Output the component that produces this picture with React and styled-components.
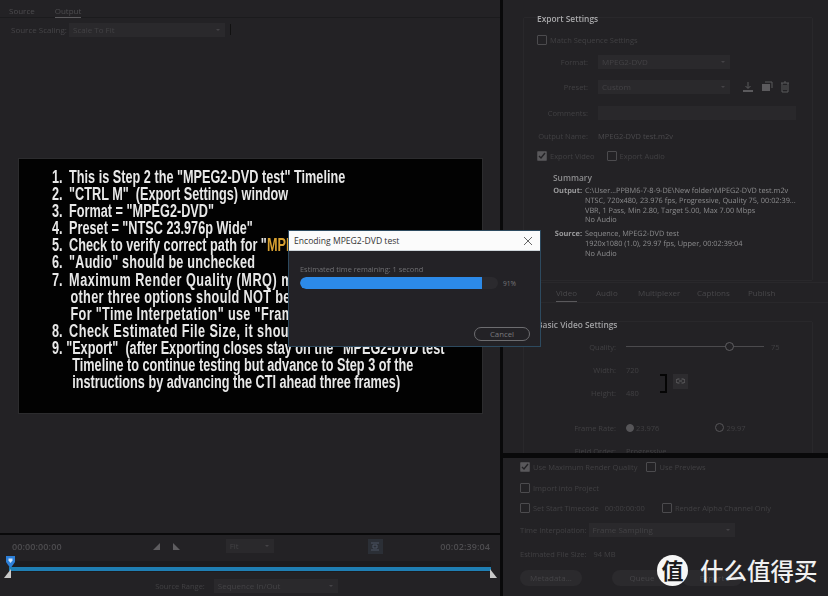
import React from "react";
import styled, { createGlobalStyle } from "styled-components";

const Global = createGlobalStyle`
  html, body { margin: 0; padding: 0; background: #0a0a0b; }
  #root { width: 828px; height: 596px; overflow: hidden; }
  * { box-sizing: border-box; }
`;

const Page = styled.div`
  position: relative;
  width: 828px;
  height: 596px;
  display: grid;
  grid-template-columns: 500px 325px;
  column-gap: 3px;
  background: #09090a;
  font-family: "Open Sans", "Noto Sans", sans-serif;
  overflow: hidden;
`;

const Left = styled.section`
  display: flex;
  flex-direction: column;
  height: 596px;
`;

const Monitor = styled.div`
  height: 533px;
  background: #232225;
  display: flex;
  flex-direction: column;
`;

const TabBar = styled.div`
  height: 18px;
  display: flex;
  padding-left: 9px;
  gap: 20px;
  border-bottom: 1px solid #1b1b1d;
`;

const Tab = styled.div`
  height: 18px;
  padding-top: 6px;
  font-size: 8px;
  line-height: 10px;
  color: #4d4c4f;
  filter: blur(0.4px);
  border-bottom: ${(p) => (p.$on ? "1px solid #5c5b5e" : "none")};
`;

const ScaleRow = styled.div`
  display: flex;
  align-items: center;
  height: 19px;
  padding: 4px 0 0 11px;
`;

const ScaleLabel = styled.span`
  width: 58px;
  font-size: 8px;
  color: #464548;
  filter: blur(0.4px);
`;

const DimSelect = styled.div`
  width: ${(p) => p.$w}px;
  height: ${(p) => p.$h || 14}px;
  margin-left: ${(p) => p.$left || 0}px;
  background: ${(p) => (p.$plain ? "#29282b" : "#2a292c")};
  color: #434245;
  font-size: 8px;
  line-height: ${(p) => p.$h || 14}px;
  padding-left: 4px;
  position: relative;
  filter: blur(0.3px);
  flex: none;
  &::after {
    content: "";
    display: ${(p) => (p.$plain ? "none" : "block")};
    position: absolute;
    right: 5px;
    top: 45%;
    border-left: 2px solid transparent;
    border-right: 2px solid transparent;
    border-top: 2px solid #444346;
  }
`;

const Tick = styled.span`
  width: 1px;
  height: 11px;
  margin-left: 5px;
  background: #111;
`;

const Frame = styled.div`
  margin: 121px 0 0 18px;
  width: 465px;
  height: 256px;
  background: #020202;
  border: 1px solid #2c2c2e;
  padding-top: 10px;
  overflow: hidden;
`;

const Slide = styled.div`
  width: 650px;
  transform: scaleX(0.725);
  transform-origin: left top;
  font-family: "Liberation Sans", Arial, sans-serif;
  font-weight: 700;
  font-size: 17.5px;
  line-height: 17.1px;
  color: #e8e8e8;
  white-space: nowrap;
  filter: blur(0.25px);
`;

const Line = styled.div`
  padding-left: ${(p) => p.$x}px;
  letter-spacing: ${(p) => p.$sp || 0}px;
  display: flex;
`;

const Num = styled.span`
  width: ${(p) => p.$w || 23.6}px;
  letter-spacing: 0;
  flex: none;
`;

const Gold = styled.span`
  color: #d9a232;
`;

const Transport = styled.div`
  flex: 1;
  margin-top: 2px;
  background: #232225;
  display: flex;
  flex-direction: column;
`;

const TimeRow = styled.div`
  height: 18px;
  padding: 0 10px 0 12px;
  display: flex;
  align-items: flex-end;
`;

const Time = styled.span`
  font-size: 9px;
  line-height: 12px;
  letter-spacing: 0.1px;
  font-weight: 600;
  color: #4e4d50;
  filter: blur(0.35px);
  margin-left: ${(p) => (p.$end ? "auto" : "0")};
`;

const TimeTools = styled.div`
  display: flex;
  align-items: center;
  height: 14px;
  margin-left: 90px;
`;

const MiniBtn = styled.div`
  width: 15px;
  height: 15px;
  margin-left: 94px;
  background: #2b2f36;
  display: flex;
  align-items: center;
  justify-content: center;
`;

const Scrub = styled.div`
  position: relative;
  height: 23px;
  margin-top: 2px;
`;

const ScrubBand = styled.div`
  position: absolute;
  left: 9px;
  right: 9px;
  top: 6px;
  height: 11px;
  background: #1c1c1f;
`;

const ScrubBar = styled.div`
  position: absolute;
  left: 9px;
  right: 9px;
  top: 12px;
  height: 4px;
  background: #1f7fb4;
`;

const RangeRow = styled.div`
  display: flex;
  justify-content: center;
  align-items: center;
  gap: 9px;
  height: 15px;
  padding-right: 7px;
`;

const Right = styled.section`
  display: flex;
  flex-direction: column;
  height: 596px;
`;

const Settings = styled.div`
  height: 453px;
  background: #232225;
  overflow: hidden;
  padding: 13px 0 0 34px;
  position: relative;
`;

const SectionFrame = styled.div`
  position: absolute;
  left: 20px;
  width: 290px;
  top: ${(p) => p.$top}px;
  height: ${(p) => p.$h}px;
  border: 1px solid #29282b;
  border-radius: 2px;
`;

const Heading = styled.div`
  position: relative;
  height: 12px;
  font-size: 8.4px;
  line-height: 12px;
  font-weight: 600;
  color: ${(p) => p.$c || "#a9a9ab"};
  filter: blur(0.3px);
  margin-top: ${(p) => p.$top || 0}px;
  margin-left: ${(p) => p.$left || 0}px;
`;

const Row = styled.div`
  position: relative;
  display: flex;
  align-items: center;
  height: ${(p) => p.$h || 14}px;
  margin-top: ${(p) => p.$top || 0}px;
`;

const Check = styled.span`
  width: 10px;
  height: 10px;
  flex: none;
  border: 1px solid #4c4b4e;
  border-radius: 1px;
  margin-right: 3px;
  margin-left: ${(p) => p.$left || 0}px;
  display: flex;
  align-items: center;
  justify-content: center;
  background: ${(p) => (p.$on ? "#59585b" : "transparent")};
  filter: blur(0.3px);
`;

const Dim = styled.span`
  font-size: 7.5px;
  color: ${(p) => p.$c || "#414043"};
  white-space: nowrap;
  filter: blur(0.4px);
  margin-left: ${(p) => p.$left || 0}px;
`;

const Label = styled.span`
  width: ${(p) => p.$w || 51}px;
  flex: none;
  text-align: right;
  margin-right: 10px;
  font-size: 7.5px;
  color: #414043;
  white-space: nowrap;
  filter: blur(0.4px);
`;

const Icons = styled.div`
  display: flex;
  gap: 7px;
  margin-left: 12px;
  color: #5b5a5d;
  filter: blur(0.3px);
`;

const SummaryRow = styled.div`
  position: relative;
  display: flex;
  margin-left: 15px;
  margin-top: ${(p) => p.$top || 0}px;
`;

const SumKey = styled.div`
  width: 30px;
  text-align: right;
  font-size: 7.4px;
  line-height: 9.8px;
  font-weight: 700;
  color: #9a9a9c;
  text-rendering: geometricPrecision;
  filter: blur(0.25px);
`;

const SumVal = styled.div`
  margin-left: 3px;
  font-size: 7.35px;
  line-height: 9.8px;
  color: #8c8c8e;
  white-space: nowrap;
  text-rendering: geometricPrecision;
  filter: blur(0.3px);
`;

const VideoTabs = styled.div`
  position: relative;
  margin: 22px 0 0 -34px;
  height: 21px;
  padding-left: 53px;
  display: flex;
  border-top: 1px solid #29282b;
  border-bottom: 1px solid #29282b;
`;

const VideoTab = styled.div`
  width: ${(p) => p.$w}px;
  font-size: 8px;
  line-height: 20px;
  color: #48474a;
  filter: blur(0.4px);
  position: relative;
  &::after {
    content: "";
    display: ${(p) => (p.$on ? "block" : "none")};
    position: absolute;
    left: 0;
    bottom: 0;
    width: 21px;
    height: 1px;
    background: #5a595c;
  }
`;

const Slider = styled.div`
  width: 138px;
  height: 1px;
  background: #4b4a4d;
  position: relative;
  flex: none;
`;

const Thumb = styled.span`
  position: absolute;
  left: 99px;
  top: -4px;
  width: 9px;
  height: 9px;
  border-radius: 50%;
  background: #232225;
  border: 1px solid #5f5e61;
`;

const DimsBlock = styled.div`
  position: relative;
`;

const Bracket = styled.span`
  position: absolute;
  left: 123px;
  top: 11px;
  width: 7px;
  height: 19px;
  border: 2px solid #050505;
  border-left: none;
`;

const LinkBtn = styled.span`
  position: absolute;
  left: 136px;
  top: 11px;
  width: 15px;
  height: 15px;
  background: #2d2c2f;
  color: #5f5e61;
  display: flex;
  align-items: center;
  justify-content: center;
  filter: blur(0.3px);
`;

const Radio = styled.span`
  width: ${(p) => (p.$on ? 8 : 9)}px;
  height: ${(p) => (p.$on ? 8 : 9)}px;
  border-radius: 50%;
  flex: none;
  border: 1px solid #565558;
  background: ${(p) => (p.$on ? "#565558" : "transparent")};
  margin-right: 2px;
  margin-left: ${(p) => p.$left || 0}px;
`;

const Options = styled.div`
  flex: 1;
  margin-top: 5px;
  background: #232225;
  padding: 2px 0 0 17px;
`;

const Pill = styled.div`
  height: 16px;
  width: ${(p) => p.$w}px;
  margin-right: ${(p) => p.$gap || 0}px;
  border-radius: 8px;
  background: #2b2a2d;
  color: #454447;
  font-size: 8px;
  line-height: 16px;
  text-align: center;
  filter: blur(0.3px);
`;

const Dialog = styled.div`
  position: absolute;
  left: 288px;
  top: 230px;
  width: 253px;
  height: 117px;
  background: #232226;
  border: 1px solid #2d4a5f;
  display: flex;
  flex-direction: column;
`;

const DialogTitle = styled.div`
  height: 20px;
  background: #fbfbfb;
  color: #333;
  font-size: 8.6px;
  line-height: 20px;
  padding-left: 5px;
  display: flex;
  justify-content: space-between;
  align-items: center;
  padding-right: 7px;
  border-bottom: 1px solid #cfd6db;
`;

const Est = styled.div`
  margin: 13px 0 0 11px;
  font-size: 7.4px;
  line-height: 10px;
  color: #707073;
  filter: blur(0.2px);
`;

const ProgressRow = styled.div`
  display: flex;
  align-items: center;
  margin: 3px 0 0 11px;
`;

const Track = styled.div`
  width: 198px;
  height: 12px;
  border-radius: 6px;
  background: #2b2a2e;
  overflow: hidden;
`;

const Fill = styled.div`
  height: 100%;
  border-radius: 6px 0 0 6px;
  background: #2c8ae8;
`;

const Pct = styled.span`
  margin-left: 5px;
  font-size: 6.6px;
  color: #77777a;
`;

const DialogFoot = styled.div`
  margin-top: auto;
  padding: 0 10px 5px 0;
  display: flex;
  justify-content: flex-end;
`;

const CancelBtn = styled.div`
  width: 56px;
  height: 14px;
  border: 1px solid #6d6d70;
  border-radius: 7px;
  font-size: 7.8px;
  line-height: 12px;
  text-align: center;
  color: #7a7a7d;
`;

const Watermark = styled.div`
  position: absolute;
  left: 657px;
  top: 555px;
  display: flex;
  align-items: center;
  gap: 12px;
  color: #f1f1f1;
  font-family: "Noto Sans CJK SC", sans-serif;
`;

const WaterBadge = styled.span`
  width: 31px;
  height: 31px;
  border-radius: 50%;
  background: #f6f6f6;
  color: #1c1c1e;
  font-size: 22px;
  line-height: 29px;
  font-weight: 700;
  text-align: center;
`;

const WaterText = styled.span`
  font-size: 23.5px;
  line-height: 31px;
  font-weight: 500;
`;

const TriIcon = styled.svg`
  margin-right: 9px;
  filter: blur(0.3px);
  flex: none;
`;

const HandleIcon = styled.svg`
  position: absolute;
  top: 14px;
  left: ${(p) => p.$left}px;
`;

const PlayheadIcon = styled.svg`
  position: absolute;
  left: 6px;
  top: 1px;
`;

const Tri = ({ flip }) => (
  <TriIcon width="10" height="9" viewBox="0 0 10 9">
    <path d={flip ? "M2 1v7h7z" : "M8 1v7H1z"} fill="#5e5d60" />
  </TriIcon>
);

const Tick2 = () => (
  <svg width="8" height="8" viewBox="0 0 8 8">
    <path d="M1 4l2 2 4-5" stroke="#232225" strokeWidth="1.4" fill="none" />
  </svg>
);

const Handle = ({ left, flip }) => (
  <HandleIcon $left={left} width="7" height="9" viewBox="0 0 7 9">
    <path d={flip ? "M0 0l7 9H0z" : "M7 0L0 9h7z"} fill="#c9c9c9" />
  </HandleIcon>
);

export default function App() {
  return (
    <Page>
      <Global />
      <Left>
        <Monitor>
          <TabBar>
            <Tab>Source</Tab>
            <Tab $on>Output</Tab>
          </TabBar>
          <ScaleRow>
            <ScaleLabel>Source Scaling:</ScaleLabel>
            <DimSelect $w={156}>Scale To Fit</DimSelect>
            <Tick />
          </ScaleRow>
          <Frame>
            <Slide>
              <Line $x={45.5}><Num>1.</Num>This is Step 2 the "MPEG2-DVD test" Timeline</Line>
              <Line $x={45.5}><Num>2.</Num>"CTRL M"&nbsp; (Export Settings) window</Line>
              <Line $x={45.5}><Num>3.</Num>Format = "MPEG2-DVD"</Line>
              <Line $x={45.5}><Num>4.</Num>Preset = "NTSC 23.976p Wide"</Line>
              <Line $x={45.5}><Num>5.</Num>Check to verify correct path for "<Gold>MPEG2</Gold>"</Line>
              <Line $x={45.5} $sp={0.25}><Num>6.</Num>"Audio" should be unchecked</Line>
              <Line $x={45.5} $sp={0.7}><Num>7.</Num>Maximum Render Quality (MRQ) must be on</Line>
              <Line $x={71} $sp={0.45}>other three options should NOT be on</Line>
              <Line $x={71} $sp={0.45}>For "Time Interpetation" use "Frame"</Line>
              <Line $x={45.5} $sp={0.6}><Num>8.</Num>Check Estimated File Size, it should</Line>
              <Line $x={45.5}><Num $w={19.5}>9.</Num>"Export"&nbsp; (after Exporting closes stay on the "MPEG2-DVD test"</Line>
              <Line $x={73.5}>Timeline to continue testing but advance to Step 3 of the</Line>
              <Line $x={73.5}>instructions by advancing the CTI ahead three frames)</Line>
            </Slide>
          </Frame>
        </Monitor>
        <Transport>
          <TimeRow>
            <Time>00:00:00:00</Time>
            <TimeTools>
              <Tri />
              <Tri flip />
              <DimSelect $w={48} $left={36}>Fit</DimSelect>
              <MiniBtn>
                <svg width="10" height="9" viewBox="0 0 10 9">
                  <path d="M1 1h8M1 8h8M3 3h4v3H3z" stroke="#4c5562" fill="none" />
                </svg>
              </MiniBtn>
            </TimeTools>
            <Time $end>00:02:39:04</Time>
          </TimeRow>
          <Scrub>
            <ScrubBand />
            <ScrubBar />
            <PlayheadIcon width="9" height="11" viewBox="0 0 9 11">
              <path d="M0 0h9v6L5.500 11h-2L0 6z" fill="#2c7fd8" />
              <path d="M2.500 2.500h4v2L4.500 7l-2-2.500z" fill="#cfe3f7" />
            </PlayheadIcon>
            <Handle left={4} />
            <Handle left={490} flip />
          </Scrub>
          <RangeRow>
            <Dim>Source Range:</Dim>
            <DimSelect $w={124}>Sequence In/Out</DimSelect>
          </RangeRow>
        </Transport>
      </Left>

      <Right>
        <Settings>
          <SectionFrame $top={17} $h={264} />
          <SectionFrame $top={321} $h={140} />
          <Heading>Export Settings</Heading>
          <Row $top={8}>
            <Check />
            <Dim>Match Sequence Settings</Dim>
          </Row>
          <Row $top={8}>
            <Label>Format:</Label>
            <DimSelect $w={132}>MPEG2-DVD</DimSelect>
          </Row>
          <Row $top={11}>
            <Label>Preset:</Label>
            <DimSelect $w={132}>Custom</DimSelect>
            <Icons>
              <svg width="12" height="12" viewBox="0 0 12 12">
                <path d="M6 1v6M3.500 5L6 7.500 8.500 5" stroke="currentColor" fill="none" />
                <path d="M1 9h10v2H1z" fill="currentColor" />
              </svg>
              <svg width="12" height="12" viewBox="0 0 12 12">
                <path d="M4 1h7v6" stroke="currentColor" fill="none" />
                <path d="M1 3h8v7H1z" fill="currentColor" />
              </svg>
              <svg width="10" height="12" viewBox="0 0 10 12">
                <path d="M1 2h8M2 2v9h6V2M4 4v5M6 4v5M4 1h2" stroke="currentColor" fill="none" />
              </svg>
            </Icons>
          </Row>
          <Row $top={12}>
            <Label>Comments:</Label>
            <DimSelect $w={198} $plain />
          </Row>
          <Row $top={9}>
            <Label>Output Name:</Label>
            <Dim $c="#4b4a4d">MPEG2-DVD test.m2v</Dim>
          </Row>
          <Row $top={6}>
            <Check $on>
              <Tick2 />
            </Check>
            <Dim>Export Video</Dim>
            <Check $left={12} />
            <Dim>Export Audio</Dim>
          </Row>
          <Heading $top={9} $left={16} $c="#8d8d8f">Summary</Heading>
          <SummaryRow $top={3}>
            <SumKey>Output:</SumKey>
            <SumVal>
              C:\User...PPBM6-7-8-9-DE\New folder\MPEG2-DVD test.m2v
              <br />
              NTSC, 720x480, 23.976 fps, Progressive, Quality 75, 00:02:39...
              <br />
              VBR, 1 Pass, Min 2.80, Target 5.00, Max 7.00 Mbps
              <br />
              No Audio
            </SumVal>
          </SummaryRow>
          <SummaryRow $top={4}>
            <SumKey>Source:</SumKey>
            <SumVal>
              Sequence, MPEG2-DVD test
              <br />
              1920x1080 (1.0), 29.97 fps, Upper, 00:02:39:04
              <br />
              No Audio
            </SumVal>
          </SummaryRow>
          <VideoTabs>
            <VideoTab $w={40} $on>Video</VideoTab>
            <VideoTab $w={42}>Audio</VideoTab>
            <VideoTab $w={59}>Multiplexer</VideoTab>
            <VideoTab $w={51}>Captions</VideoTab>
            <VideoTab $w={40}>Publish</VideoTab>
          </VideoTabs>
          <Heading $top={16} $c="#a2a2a4">Basic Video Settings</Heading>
          <Row $top={9}>
            <Label $w={79}>Quality:</Label>
            <Slider><Thumb /></Slider>
            <Dim $left={7}>75</Dim>
          </Row>
          <DimsBlock>
            <Row $top={9}>
              <Label $w={79}>Width:</Label>
              <Dim>720</Dim>
            </Row>
            <Row $top={9}>
              <Label $w={79}>Height:</Label>
              <Dim>480</Dim>
            </Row>
            <Bracket />
            <LinkBtn>
              <svg width="9" height="6" viewBox="0 0 9 6">
                <path d="M3.500 1H2a2 2 0 0 0 0 4h1.500M5.500 1H7a2 2 0 0 1 0 4H5.500M3 3h3" stroke="currentColor" fill="none" />
              </svg>
            </LinkBtn>
          </DimsBlock>
          <Row $top={21}>
            <Label $w={79}>Frame Rate:</Label>
            <Radio $on />
            <Dim>23.976</Dim>
            <Radio $left={56} />
            <Dim>29.97</Dim>
          </Row>
          <Row $top={9}>
            <Label $w={79}>Field Order:</Label>
            <Dim>Progressive</Dim>
          </Row>
        </Settings>
        <Options>
          <Row>
            <Check $on><Tick2 /></Check>
            <Dim>Use Maximum Render Quality</Dim>
            <Check $left={9} />
            <Dim>Use Previews</Dim>
          </Row>
          <Row $top={7}>
            <Check />
            <Dim>Import into Project</Dim>
          </Row>
          <Row $top={6}>
            <Check />
            <Dim>Set Start Timecode</Dim>
            <Dim $left={6}>00:00:00:00</Dim>
            <Check $left={17} />
            <Dim>Render Alpha Channel Only</Dim>
          </Row>
          <Row $top={8}>
            <Dim>Time Interpolation:</Dim>
            <DimSelect $w={146} $left={2}>Frame Sampling</DimSelect>
          </Row>
          <Row $top={10}>
            <Dim>Estimated File Size:</Dim>
            <Dim $left={7}>94 MB</Dim>
          </Row>
          <Row $top={9} $h={16}>
            <Pill $w={62} $gap={30}>Metadata...</Pill>
            <Pill $w={60} $gap={10}>Queue</Pill>
            <Pill $w={60}>Export</Pill>
          </Row>
        </Options>
      </Right>

      <Dialog>
        <DialogTitle>
          Encoding MPEG2-DVD test
          <svg width="10" height="10" viewBox="0 0 10 10">
            <path d="M1 1l8 8M9 1l-8 8" stroke="#555" strokeWidth="0.9" />
          </svg>
        </DialogTitle>
        <Est>Estimated time remaining: 1 second</Est>
        <ProgressRow>
          <Track>
            <Fill style={{ width: "92%" }} />
          </Track>
          <Pct>91%</Pct>
        </ProgressRow>
        <DialogFoot>
          <CancelBtn>Cancel</CancelBtn>
        </DialogFoot>
      </Dialog>

      <Watermark>
        <WaterBadge>值</WaterBadge>
        <WaterText>什么值得买</WaterText>
      </Watermark>
    </Page>
  );
}
